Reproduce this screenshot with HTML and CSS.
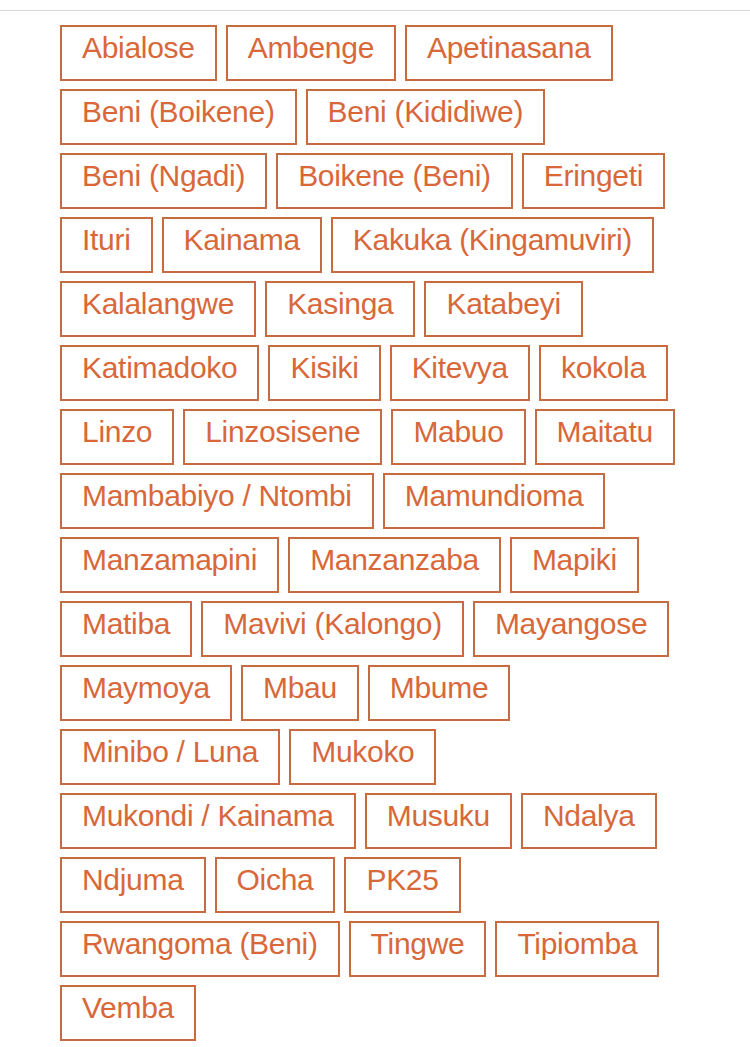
FILE: index.html
```html
<!DOCTYPE html>
<html lang="en">
<head>
    <meta charset="UTF-8">
    <meta name="viewport" content="width=device-width, initial-scale=1.0">
    <title>Localités</title>
    <link rel="stylesheet" href="styles.css">
</head>
<body>
    <div class="top-rule"></div>

    <ul class="tag-list">
        <li><a class="tag" href="#">Abialose</a></li>
        <li><a class="tag" href="#">Ambenge</a></li>
        <li><a class="tag" href="#">Apetinasana</a></li>
        <li><a class="tag" href="#">Beni (Boikene)</a></li>
        <li><a class="tag" href="#">Beni (Kididiwe)</a></li>
        <li><a class="tag" href="#">Beni (Ngadi)</a></li>
        <li><a class="tag" href="#">Boikene (Beni)</a></li>
        <li><a class="tag" href="#">Eringeti</a></li>
        <li><a class="tag" href="#">Ituri</a></li>
        <li><a class="tag" href="#">Kainama</a></li>
        <li><a class="tag" href="#">Kakuka (Kingamuviri)</a></li>
        <li><a class="tag" href="#">Kalalangwe</a></li>
        <li><a class="tag" href="#">Kasinga</a></li>
        <li><a class="tag" href="#">Katabeyi</a></li>
        <li><a class="tag" href="#">Katimadoko</a></li>
        <li><a class="tag" href="#">Kisiki</a></li>
        <li><a class="tag" href="#">Kitevya</a></li>
        <li><a class="tag" href="#">kokola</a></li>
        <li><a class="tag" href="#">Linzo</a></li>
        <li><a class="tag" href="#">Linzosisene</a></li>
        <li><a class="tag" href="#">Mabuo</a></li>
        <li><a class="tag" href="#">Maitatu</a></li>
        <li><a class="tag" href="#">Mambabiyo / Ntombi</a></li>
        <li><a class="tag" href="#">Mamundioma</a></li>
        <li><a class="tag" href="#">Manzamapini</a></li>
        <li><a class="tag" href="#">Manzanzaba</a></li>
        <li><a class="tag" href="#">Mapiki</a></li>
        <li><a class="tag" href="#">Matiba</a></li>
        <li><a class="tag" href="#">Mavivi (Kalongo)</a></li>
        <li><a class="tag" href="#">Mayangose</a></li>
        <li><a class="tag" href="#">Maymoya</a></li>
        <li><a class="tag" href="#">Mbau</a></li>
        <li><a class="tag" href="#">Mbume</a></li>
        <li><a class="tag" href="#">Minibo / Luna</a></li>
        <li><a class="tag" href="#">Mukoko</a></li>
        <li><a class="tag" href="#">Mukondi / Kainama</a></li>
        <li><a class="tag" href="#">Musuku</a></li>
        <li><a class="tag" href="#">Ndalya</a></li>
        <li><a class="tag" href="#">Ndjuma</a></li>
        <li><a class="tag" href="#">Oicha</a></li>
        <li><a class="tag" href="#">PK25</a></li>
        <li><a class="tag" href="#">Rwangoma (Beni)</a></li>
        <li><a class="tag" href="#">Tingwe</a></li>
        <li><a class="tag" href="#">Tipiomba</a></li>
        <li><a class="tag" href="#">Vemba</a></li>
    </ul>
</body>
</html>
```

FILE: styles.css
```css
body {
    font-family: "Liberation Sans", Arial, sans-serif;
    margin: 0;
    background-color: #fff;
}

/* Тонкая линия под шапкой */
.top-rule {
    height: 10px;
    border-bottom: 1px solid #d6d6d6;
}

.tag-list {
    list-style: none;
    display: flex;
    flex-wrap: wrap;
    gap: 8px 9px;
    margin: 0;
    padding: 14px 60px;
}

.tag {
    display: block;
    padding: 3px 20px 13px;
    font-size: 30px;
    line-height: 36px;
    letter-spacing: -0.3px;
    color: #d8683a;
    text-decoration: none;
    border: 2px solid #c96b40;
    white-space: nowrap;
}
```
